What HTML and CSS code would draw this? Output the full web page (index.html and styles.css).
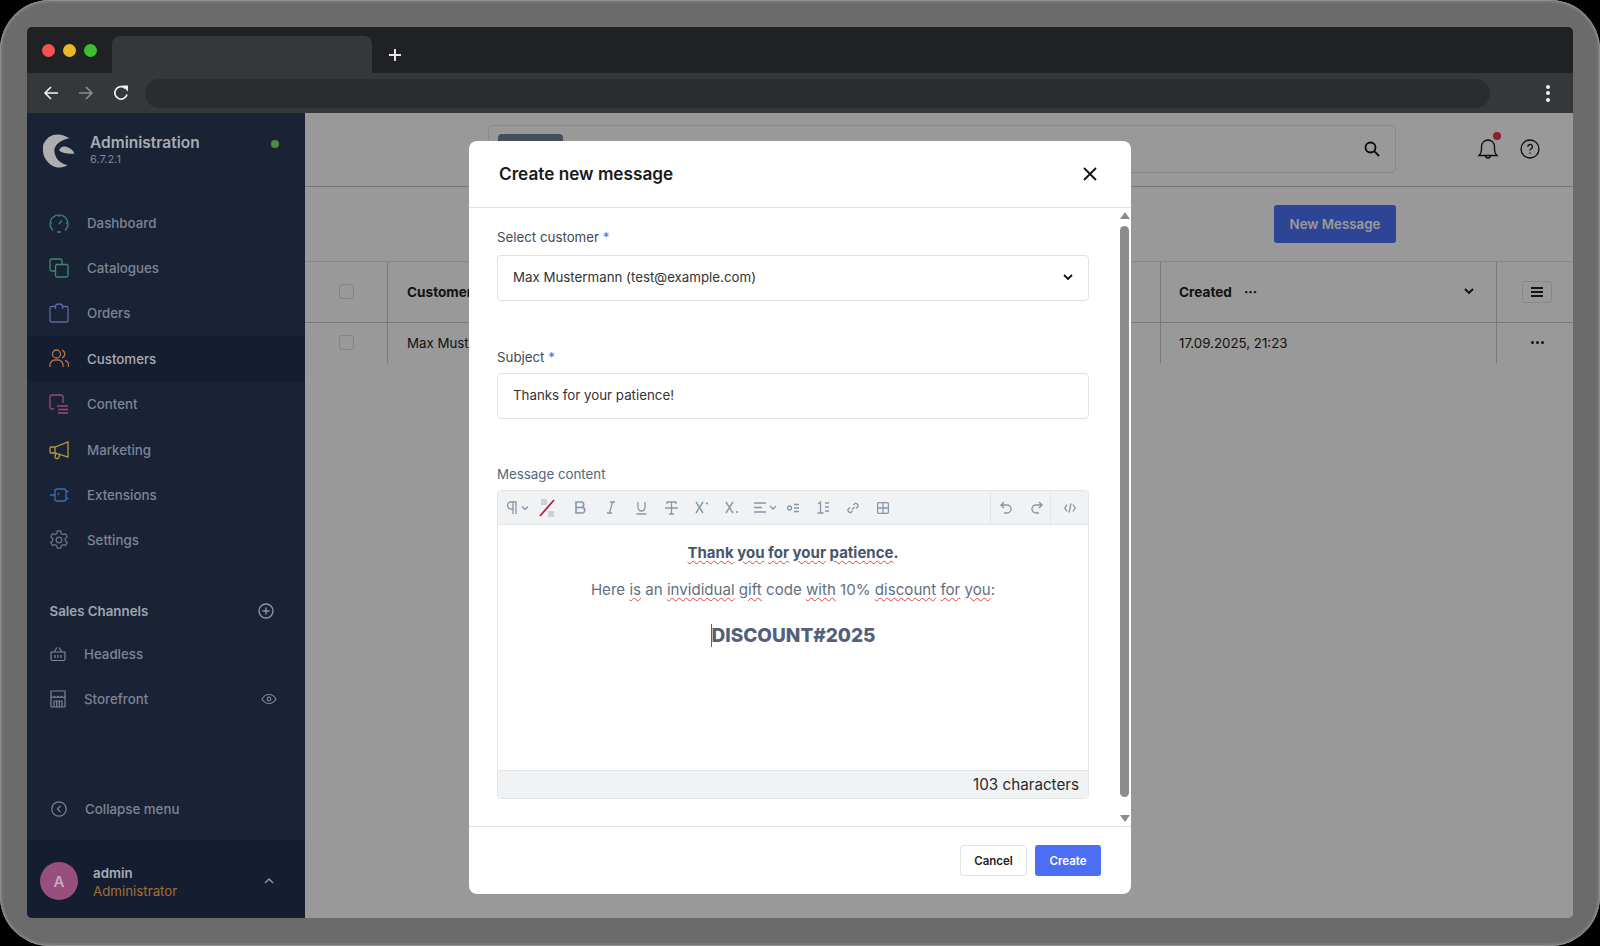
FILE: index.html
```html
<!DOCTYPE html>
<html lang="en">
<head>
  <meta charset="UTF-8">
  <meta name="viewport" content="width=device-width, initial-scale=1.0">
  <title>Administration</title>
  <link rel="stylesheet" href="styles.css">
</head>
<body>
  <div class="bezel">
    <div class="window">

      <!-- browser chrome -->
      <div class="tabstrip">
        <div class="lights">
          <span class="light red"></span>
          <span class="light yellow"></span>
          <span class="light green"></span>
        </div>
        <div class="tab"></div>
        <svg class="new-tab" width="14" height="14" viewBox="0 0 14 14"><path d="M7 1v12M1 7h12" stroke="#e6e6e6" stroke-width="2" fill="none"/></svg>
      </div>
      <div class="toolbar">
        <svg class="nav" width="16" height="16" viewBox="0 0 16 16"><path d="M15 8H2M8 2L2 8l6 6" stroke="#f2f2f2" stroke-width="1.6" fill="none"/></svg>
        <svg class="nav" width="16" height="16" viewBox="0 0 16 16"><path d="M1 8h13M8 2l6 6-6 6" stroke="#8a8c8e" stroke-width="1.6" fill="none"/></svg>
        <svg class="nav" width="16" height="16" viewBox="0 0 16 16"><path d="M14 9.500A6.200 6.200 0 1 1 12.300 3.400" stroke="#f2f2f2" stroke-width="1.7" fill="none"/><path d="M9 .5h6v6z" fill="#f2f2f2"/></svg>
        <div class="address"></div>
        <div class="kebab"><i></i><i></i><i></i></div>
      </div>

      <div class="app">
        <!-- sidebar -->
        <aside class="sidebar">
          <div class="brand">
            <svg class="logo" width="32" height="34" viewBox="0 0 32 34"><path d="M26.300 4.300C20 0 12-1 6 3 0 8-1 13 0 18c1 8 8 15 15 15.500 3 0 7-.5 9.700-2.500-6.700-1-12.700-6-13.400-14C11 11 18 6 26.300 4.300z" fill="#aeaeae"/><path d="M16 16.500C17 13 20 12 23 12.700c4 .8 7 3.300 8.500 6.800-4.500.5-11.500.5-15.500-3z" fill="#aeaeae"/></svg>
            <div class="brand-text">
              <div class="brand-name">Administration</div>
              <div class="brand-version">6.7.2.1</div>
            </div>
            <span class="status-dot"></span>
          </div>

          <nav class="main-nav">
            <a class="nav-item">
              <svg width="20" height="20" viewBox="0 0 20 20" fill="none" stroke="#3f7d86" stroke-width="1.3"><path d="M4 17.500A9 9 0 1 1 16 17.500"/><path d="M8 19h4M10 11l3-3.500M10 2.500v1.500M3 10H1.500M18.500 10H17"/></svg>
              Dashboard
            </a>
            <a class="nav-item">
              <svg width="20" height="20" viewBox="0 0 20 20" fill="none" stroke="#3f8a6d" stroke-width="1.3"><path d="M13 6.500V2.500a1.500 1.500 0 0 0-1.500-1.500h-9A1.500 1.500 0 0 0 1 2.500v9A1.500 1.500 0 0 0 2.500 13h4"/><rect x="6.500" y="6.500" width="12.500" height="12.500" rx="1.500"/></svg>
              Catalogues
            </a>
            <a class="nav-item">
              <svg width="20" height="20" viewBox="0 0 20 20" fill="none" stroke="#5c6aa8" stroke-width="1.3"><path d="M6 3.500H2.500A1.500 1.500 0 0 0 1 5v12.500A1.500 1.500 0 0 0 2.500 19h15a1.500 1.500 0 0 0 1.500-1.500V5a1.500 1.500 0 0 0-1.500-1.500H14"/><path d="M6.500 6V3.500a3.500 2.500 0 0 1 7 0V6"/></svg>
              Orders
            </a>
            <a class="nav-item active">
              <svg width="20" height="20" viewBox="0 0 20 20" fill="none" stroke="#b0734a" stroke-width="1.3"><circle cx="7.500" cy="5" r="4"/><path d="M1 18v-2a5 5 0 0 1 5-5h3a5 5 0 0 1 5 5v2M13 1.200a4 4 0 0 1 0 7.600M16 11.500a4.500 4.500 0 0 1 3.500 4.500v2"/></svg>
              Customers
            </a>
            <a class="nav-item">
              <svg width="20" height="20" viewBox="0 0 20 20" fill="none" stroke="#9a4a7c" stroke-width="1.3"><path d="M14 9V2.500A1.500 1.500 0 0 0 12.500 1h-10A1.500 1.500 0 0 0 1 2.500v11A1.500 1.500 0 0 0 2.500 15H5"/><path d="M8 12h11M9 15.500h10M9 19h10" stroke-width="1.600"/></svg>
              Content
            </a>
            <a class="nav-item">
              <svg width="20" height="20" viewBox="0 0 20 20" fill="none" stroke="#b39b33" stroke-width="1.3"><path d="M19 2v15L6 13H2a1 1 0 0 1-1-1V8a1 1 0 0 1 1-1h4zM6 7v6M7 13.500l-1 2.500a2 2 0 0 0 4 1l.5-2"/></svg>
              Marketing
            </a>
            <a class="nav-item">
              <svg width="20" height="20" viewBox="0 0 20 20" fill="none" stroke="#3f6ea8" stroke-width="1.3"><rect x="6" y="4" width="11" height="12" rx="2"/><path d="M1 10h5M17 6.500h2.500M17 13.500h2.500M9.500 8v2"/></svg>
              Extensions
            </a>
            <a class="nav-item">
              <svg width="20" height="20" viewBox="0 0 20 20" fill="none" stroke="#6a7280" stroke-width="1.3"><circle cx="10" cy="10" r="2.800"/><path d="M8.300 1h3.400l.6 2.600 1.700 1 2.500-.8 1.700 3-1.900 1.800v2l1.900 1.800-1.700 3-2.500-.8-1.700 1-.6 2.600H8.300l-.6-2.600-1.700-1-2.500.8-1.700-3 1.900-1.800v-2L1.800 6.800l1.700-3 2.500.8 1.700-1z"/></svg>
              Settings
            </a>
          </nav>

          <div class="channels-head">
            <span>Sales Channels</span>
            <svg width="16" height="16" viewBox="0 0 16 16" fill="none" stroke="#8c93a1" stroke-width="1.4"><circle cx="8" cy="8" r="7"/><path d="M8 4.500v7M4.500 8h7"/></svg>
          </div>
          <a class="channel">
            <svg width="16" height="16" viewBox="0 0 16 16" fill="none" stroke="#7d8595" stroke-width="1.2"><path d="M1 6h14v7a1.500 1.500 0 0 1-1.500 1.500h-11A1.500 1.500 0 0 1 1 13zM4 6l3-4.500M12 6L9 1.500M5 9v3M8 9v3M11 9v3"/></svg>
            <span class="channel-name">Headless</span>
          </a>
          <a class="channel">
            <svg width="16" height="18" viewBox="0 0 16 18" fill="none" stroke="#7d8595" stroke-width="1.2"><path d="M1 1h14v15.500a.5.5 0 0 1-.5.5h-13a.5.5 0 0 1-.5-.5zM1 6c1 2 3 2 3.500 0 .5 2 3 2 3.500 0 .5 2 3 2 3.500 0 .5 2 2.500 2 3.500 0M4 17v-6h8v6M6.700 11v6M9.300 11v6"/></svg>
            <span class="channel-name">Storefront</span>
            <svg class="eye" width="16" height="12" viewBox="0 0 16 12" fill="none" stroke="#7d8595" stroke-width="1.2"><path d="M1 6c3.500-6 10.500-6 14 0-3.500 6-10.500 6-14 0z"/><circle cx="8" cy="6" r="1.800"/></svg>
          </a>

          <a class="collapse">
            <svg width="16" height="16" viewBox="0 0 16 16" fill="none" stroke="#7d8595" stroke-width="1.2"><circle cx="8" cy="8" r="7.200"/><path d="M9.500 5L6.500 8l3 3"/></svg>
            Collapse menu
          </a>
          <div class="user">
            <div class="avatar">A</div>
            <div class="user-text">
              <div class="user-name">admin</div>
              <div class="user-role">Administrator</div>
            </div>
            <svg width="10" height="6" viewBox="0 0 10 6" fill="none" stroke="#8c93a1" stroke-width="1.5"><path d="M1 5l4-4 4 4"/></svg>
          </div>
        </aside>

        <!-- page behind the modal -->
        <main class="content">
          <div class="topbar">
            <div class="search">
              <span class="search-chip"></span>
              <svg width="16" height="16" viewBox="0 0 16 16" fill="none" stroke="#111" stroke-width="1.8"><circle cx="6.500" cy="6.500" r="5"/><path d="M10.200 10.200L15 15"/></svg>
            </div>
            <div class="bell">
              <svg width="22" height="24" viewBox="0 0 22 24" fill="none" stroke="#111" stroke-width="1.3"><path d="M2 18.500c1.500-1.500 2.500-3 2.500-6V9.500a6.500 6.500 0 0 1 13 0v3c0 3 1 4.500 2.500 6zM8.500 18.500a2.500 2.500 0 0 0 5 0"/></svg>
              <span class="bell-dot"></span>
            </div>
            <svg class="help" width="20" height="20" viewBox="0 0 20 20" fill="none" stroke="#111" stroke-width="1.300"><circle cx="10" cy="10" r="9"/><path d="M7.800 7.800a2.300 2.300 0 1 1 3.400 2c-.8.500-1.200 1-1.200 1.700M10 13.500v1.300"/></svg>
          </div>
          <div class="actionbar">
            <button class="btn-new">New Message</button>
          </div>
          <div class="table">
            <div class="row head">
              <div class="cell cell-check"><span class="checkbox"></span></div>
              <div class="cell cell-name"><b>Customer</b></div>
              <div class="cell cell-date">
                <b>Created</b>
                <span class="dots">···</span>
                <svg class="sort" width="10" height="7" viewBox="0 0 10 7" fill="none" stroke="#111" stroke-width="1.800"><path d="M1 1l4 4 4-4"/></svg>
              </div>
              <div class="cell cell-end">
                <span class="col-btn"><i></i><i></i><i></i></span>
              </div>
            </div>
            <div class="row">
              <div class="cell cell-check"><span class="checkbox"></span></div>
              <div class="cell cell-name">Max Mustermann</div>
              <div class="cell cell-date">17.09.2025, 21:23</div>
              <div class="cell cell-end"><span class="row-dots"><i></i><i></i><i></i></span></div>
            </div>
          </div>
          <div class="backdrop"></div>

          <!-- modal -->
          <div class="modal">
            <div class="modal-head">
              <h2>Create new message</h2>
              <svg width="14" height="14" viewBox="0 0 14 14" fill="none" stroke="#111" stroke-width="1.800"><path d="M1 1l12 12M13 1L1 13"/></svg>
            </div>
            <div class="modal-body">
              <div class="form">
                <label class="field-label label-customer">Select customer <em>*</em></label>
                <div class="input">
                  Max Mustermann (test@example.com)
                  <svg width="10" height="7" viewBox="0 0 10 7" fill="none" stroke="#111" stroke-width="1.800"><path d="M1 1l4 4 4-4"/></svg>
                </div>
                <label class="field-label label-subject">Subject <em>*</em></label>
                <div class="input">Thanks for your patience!</div>
                <label class="field-label label-message">Message content</label>
                <div class="editor">
                  <div class="editor-tools">
                    <div class="tools-main">
                      <span class="tool tool-para"><svg width="24" height="14" viewBox="0 0 24 14" fill="none" stroke="#8797a8" stroke-width="1.300"><path d="M10 13V1H5a3.500 3.500 0 0 0 0 7h2M7 13V1M16 5.500l3 3 3-3" /></svg></span>
                      <span class="tool"><svg width="18" height="20" viewBox="0 0 18 20" fill="none"><path d="M3 1h6v6H3zM10 13h6v6h-6z" fill="#ccd1d6"/><path d="M16 2L2 18" stroke="#b3243c" stroke-width="1.800"/></svg></span>
                      <span class="tool tool-b"><svg width="11" height="13" viewBox="0 0 11 13" fill="none" stroke="#8797a8" stroke-width="1.600"><path d="M1 1h5a2.700 2.700 0 0 1 0 5.500H1zM1 6.500h6a2.700 2.700 0 0 1 0 5.500H1z"/></svg></span>
                      <span class="tool"><svg width="8" height="13" viewBox="0 0 8 13" fill="none" stroke="#8797a8" stroke-width="1.300"><path d="M3 1h5M0 12h5M5.500 1l-3 11"/></svg></span>
                      <span class="tool"><svg width="11" height="14" viewBox="0 0 11 14" fill="none" stroke="#8797a8" stroke-width="1.300"><path d="M2 1v5.500a3.500 3.500 0 0 0 7 0V1M.5 13h10"/></svg></span>
                      <span class="tool"><svg width="13" height="14" viewBox="0 0 13 14" fill="none" stroke="#8797a8" stroke-width="1.300"><path d="M2 3V1h9v2M6.500 1v12M4 13h5M0 7h13"/></svg></span>
                      <span class="tool"><svg width="13" height="13" viewBox="0 0 13 13" fill="none" stroke="#8797a8" stroke-width="1.400"><path d="M1 1l7 11M8 1L1 12M11 2.500h2"/></svg></span>
                      <span class="tool"><svg width="13" height="13" viewBox="0 0 13 13" fill="none" stroke="#8797a8" stroke-width="1.400"><path d="M1 1l7 11M8 1L1 12M11 11h2"/></svg></span>
                      <span class="tool tool-align"><svg width="24" height="11" viewBox="0 0 24 11" fill="none" stroke="#8797a8" stroke-width="1.300"><path d="M0 1h12M0 5.500h8M0 10h12M16 4l3 3 3-3"/></svg></span>
                      <span class="tool"><svg width="12" height="10" viewBox="0 0 12 10" fill="none" stroke="#8797a8" stroke-width="1.300"><circle cx="2.500" cy="5" r="2"/><path d="M7 1.500h5M7 5h5M7 8.500h5"/></svg></span>
                      <span class="tool"><svg width="12" height="13" viewBox="0 0 12 13" fill="none" stroke="#8797a8" stroke-width="1.300"><path d="M1 3l2.500-2v11M.5 12h6M8 2h4M8 6h4M8 10h4"/></svg></span>
                      <span class="tool"><svg width="12" height="12" viewBox="0 0 12 12" fill="none" stroke="#8797a8" stroke-width="1.300"><path d="M5 7.500l2.500-2.500M6.500 3l1.500-1.500a2.500 2.500 0 0 1 3 3L9 6.500M5.500 9L4 10.500a2.500 2.500 0 0 1-3-3L3 5.500"/></svg></span>
                      <span class="tool"><svg width="12" height="12" viewBox="0 0 12 12" fill="none" stroke="#8797a8" stroke-width="1.300"><rect x=".6" y=".6" width="10.800" height="10.800" rx="1.500"/><path d="M6 .6v10.800M.6 6h10.800"/></svg></span>
                    </div>
                    <div class="tools-group">
                      <svg width="12" height="13" viewBox="0 0 12 13" fill="none" stroke="#8797a8" stroke-width="1.400"><path d="M4 1L1 4l3 3M1 4h6a4 4 0 0 1 0 8H4"/></svg>
                      <svg width="12" height="13" viewBox="0 0 12 13" fill="none" stroke="#8797a8" stroke-width="1.400"><path d="M8 1l3 3-3 3M11 4H5a4 4 0 0 0 0 8h3"/></svg>
                    </div>
                    <div class="tools-code">
                      <svg width="12" height="10" viewBox="0 0 12 10" fill="none" stroke="#8797a8" stroke-width="1.300"><path d="M3 1.500L.8 5 3 8.500M9 1.500L11.200 5 9 8.500M7 .5L5 9.500"/></svg>
                    </div>
                  </div>
                  <div class="editor-text">
                    <p class="thanks"><u>Thank</u> <u>you</u> <u>for</u> <u>your</u> <u>patience</u>.</p>
                    <p class="gift">Here <u>is</u> an <u>invididual</u> <u>gift</u> code <u>with</u> 10% <u>discount</u> <u>for</u> <u>you</u>:</p>
                    <p class="code"><span class="caret">DISCOUNT#2025</span></p>
                  </div>
                  <div class="editor-foot">103 characters</div>
                </div>
              </div>
              <div class="scrollbar">
                <span class="arrow up"></span>
                <span class="thumb"></span>
                <span class="arrow down"></span>
              </div>
            </div>
            <div class="modal-foot">
              <button class="btn-cancel">Cancel</button>
              <button class="btn-create">Create</button>
            </div>
          </div>
        </main>
      </div>
    </div>
  </div>
</body>
</html>
```

FILE: styles.css
```css
* {
  box-sizing: border-box;
}
html, body {
  margin: 0;
  height: 100%;
  background: #000;
  overflow: hidden;
}
body {
  font-family: Inter, "Noto Sans", sans-serif;
  font-size: 13.3px;
}
.bezel {
  width: 1600px;
  height: 946px;
  padding: 27px 27px 28px 27px;
  background: #6b6b6b;
  border-radius: 50px;
  box-shadow: inset 0 0 0 1px #8f8f8f, inset 0 0 0 3px #767676;
}
.window {
  display: flex;
  flex-direction: column;
  height: 100%;
  border-radius: 5px;
  overflow: hidden;
}

/* browser chrome */
.tabstrip {
  display: flex;
  align-items: flex-end;
  height: 46px;
  background: #1f2124;
}
.lights {
  display: flex;
  gap: 8.4px;
  width: 85px;
  padding: 17px 0 0 14.5px;
  align-self: flex-start;
}
.light {
  width: 13px;
  height: 13px;
  border-radius: 50%;
}
.light.red { background: #f4544f; }
.light.yellow { background: #e9b826; }
.light.green { background: #3fbd33; }
.tab {
  width: 260px;
  height: 37px;
  background: #35383b;
  border-radius: 8px 8px 0 0;
}
.new-tab {
  margin: 0 0 11px 16px;
}
.toolbar {
  display: flex;
  align-items: center;
  height: 40px;
  background: #35383b;
}
.nav {
  margin-left: 16px;
  flex: none;
  margin-right: 3px;
}
.nav:first-child {
  margin-left: 16px;
}
.address {
  width: 1345px;
  height: 29px;
  margin-left: 13px;
  background: #2a2d2f;
  border-radius: 15px;
}
.kebab {
  display: flex;
  flex-direction: column;
  gap: 2.5px;
  margin-left: 56px;
}
.kebab i {
  width: 4px;
  height: 4px;
  background: #f2f2f2;
  border-radius: 50%;
}
.app {
  display: flex;
  flex: 1;
  min-height: 0;
}

/* sidebar */
.sidebar {
  display: flex;
  flex-direction: column;
  width: 278px;
  flex: none;
  background: #1a2236;
  color: #7d8595;
}
.brand {
  display: flex;
  align-items: center;
  height: 68px;
  padding: 7px 0 0 16px;
}
.brand-text {
  margin: -3px 0 0 15px;
}
.brand-name {
  font-size: 15.5px;
  font-weight: 600;
  line-height: 20px;
  color: #a8acb4;
}
.brand-version {
  font-size: 11px;
  line-height: 13px;
  color: #7d8595;
}
.status-dot {
  width: 8px;
  height: 8px;
  margin: -14px 0 0 71px;
  background: #4e8c3c;
  border-radius: 50%;
}
.main-nav {
  margin-top: 19px;
}
.nav-item {
  display: flex;
  align-items: center;
  gap: 18px;
  height: 45.4px;
  padding-left: 22px;
  font-weight: 500;
}
.nav-item.active {
  background: #151d30;
  color: #a8acb4;
}
.channels-head {
  display: flex;
  justify-content: space-between;
  align-items: center;
  margin-top: 26px;
  height: 44px;
  padding: 0 31.5px 0 22.5px;
  font-weight: 600;
  color: #a0a5ae;
}
.channel {
  display: flex;
  align-items: center;
  height: 45.5px;
  padding-left: 23px;
  font-weight: 500;
}
.channels-head + .channel {
  margin-top: -2px;
}
.channel-name {
  margin-left: 18px;
}
.channel svg:first-child {
  flex: none;
}
.eye {
  margin-left: auto;
  margin-right: 28px;
}
.collapse {
  display: flex;
  align-items: center;
  gap: 18px;
  margin-top: auto;
  height: 60px;
  padding: 0 0 3px 24px;
  font-weight: 500;
}
.user {
  display: flex;
  align-items: center;
  height: 78px;
  padding: 4px 31px 0 13px;
  background: #151d30;
}
.avatar {
  display: flex;
  align-items: center;
  justify-content: center;
  width: 38px;
  height: 38px;
  background: #964f7f;
  border-radius: 50%;
  font-size: 15px;
  font-weight: 600;
  color: #c9a9bf;
}
.user-text {
  flex: 1;
  margin-left: 15px;
  padding-top: 2px;
  line-height: 18px;
}
.user-name {
  font-weight: 600;
  color: #a8acb4;
}
.user-role {
  color: #a36f35;
}

/* page behind the modal */
.content {
  position: relative;
  flex: 1;
  background: #fff;
  color: #222;
}
.backdrop {
  position: absolute;
  inset: 0;
  background: rgba(0, 0, 0, 0.4);
}
.topbar {
  display: flex;
  align-items: center;
  height: 73.5px;
  padding-left: 183px;
  border-bottom: 1px solid #c0c4c8;
}
.search {
  display: flex;
  align-items: center;
  justify-content: flex-end;
  position: relative;
  width: 908px;
  height: 48px;
  padding-right: 15px;
  margin-top: -1px;
  border: 1px solid #e2e5e8;
  border-radius: 4px;
}
.search-chip {
  position: absolute;
  left: 9px;
  top: 8px;
  width: 65px;
  height: 30px;
  background: #73839c;
  border-radius: 4px;
}
.bell {
  position: relative;
  margin-left: 81px;
  height: 24px;
}
.bell-dot {
  position: absolute;
  right: -2px;
  top: -5px;
  width: 8px;
  height: 8px;
  background: #f0314f;
  border-radius: 50%;
}
.help {
  margin-left: 21px;
}
.actionbar {
  display: flex;
  justify-content: flex-end;
  align-items: center;
  height: 73.5px;
  padding: 0 177px 0 0;
  margin-top: 1px;
}
.btn-new {
  width: 122px;
  height: 38px;
  background: #4e73f8;
  border: 0;
  border-radius: 3px;
  font: 600 13.3px Inter, sans-serif;
  color: #fff;
}
.table {
  border-top: 1px solid #dfe2e5;
}
.row {
  display: flex;
  height: 40.5px;
}
.row.head {
  height: 60.5px;
  border-bottom: 1px solid #c6cacf;
}
.row.head b {
  font-size: 13.6px;
}
.cell {
  display: flex;
  align-items: center;
}
.cell-check {
  justify-content: center;
  width: 82px;
}
.checkbox {
  width: 15px;
  height: 15px;
  margin-left: 1px;
  border: 1px solid #d8dce0;
  border-radius: 3px;
}
.cell-name {
  width: 773px;
  padding-left: 19px;
  border-left: 1px solid #c6cacf;
}
.cell-date {
  width: 336px;
  padding-left: 18px;
  border-left: 1px solid #c6cacf;
}
.dots {
  margin-left: 12px;
  font-weight: 700;
}
.sort {
  margin-left: auto;
  margin-right: 22px;
}
.cell-end {
  flex: 1;
  justify-content: center;
  padding-left: 4px;
  border-left: 1px solid #c6cacf;
}
.col-btn {
  display: flex;
  flex-direction: column;
  align-items: center;
  justify-content: center;
  gap: 2px;
  width: 30px;
  height: 22px;
  border: 1px solid #dfe2e5;
  border-radius: 3px;
}
.col-btn i {
  width: 12px;
  height: 2px;
  background: #222;
}
.row-dots {
  display: flex;
  gap: 2px;
}
.row-dots i {
  width: 3px;
  height: 3px;
  background: #222;
  border-radius: 50%;
}

/* modal */
.modal {
  position: absolute;
  left: 164px;
  top: 28px;
  display: flex;
  flex-direction: column;
  width: 662px;
  height: 753px;
  background: #fff;
  border-radius: 8px;
}
.modal-head {
  display: flex;
  justify-content: space-between;
  align-items: center;
  flex: none;
  height: 66.5px;
  padding: 0 34px 0 30px;
  border-bottom: 1px solid #e0e3e6;
}
.modal-head h2 {
  margin: 0;
  font-size: 17.2px;
  font-weight: 600;
  color: #1a1a1a;
}
.modal-body {
  display: flex;
  flex: 1;
  min-height: 0;
}
.form {
  width: 651px;
  padding: 0 0 0 28px;
}
.field-label {
  display: block;
  height: 17px;
  line-height: 17px;
  color: #52667a;
}
.field-label em {
  font-style: normal;
  color: #4f6ef7;
}
.label-customer {
  margin-top: 21px;
  margin-bottom: 9.5px;
  color: #3d4a57;
}
.label-subject {
  margin-top: 47.5px;
  margin-bottom: 7px;
  color: #3d4a57;
}
.label-message {
  margin-top: 47.8px;
  margin-bottom: 7px;
}
.input {
  display: flex;
  justify-content: space-between;
  align-items: center;
  width: 592px;
  height: 46px;
  padding: 0 15px 2px 15px;
  border: 1px solid #dfe2e5;
  border-radius: 4px;
  color: #333;
}
.editor {
  display: flex;
  flex-direction: column;
  width: 592px;
  height: 308.5px;
  border: 1px solid #e3e6e9;
  border-radius: 4px;
  overflow: hidden;
}
.editor-tools {
  display: flex;
  flex: none;
  height: 34px;
  background: #f0f2f4;
  border-bottom: 1px solid #e3e6e9;
}
.tools-main {
  display: flex;
  align-items: center;
  width: 492px;
  padding-left: 6px;
}
.tool {
  display: flex;
  align-items: center;
  justify-content: center;
  flex: none;
  width: 30.3px;
}
.tool-para {
  width: 28px;
}
.tool-b {
  margin-left: 3px;
}
.tool-align svg {
  margin-left: 8px;
  flex: none;
}
.tools-group {
  display: flex;
  align-items: center;
  justify-content: center;
  gap: 19px;
  width: 61px;
  padding-left: 1px;
  border-left: 1px solid #e3e6e9;
  border-right: 1px solid #e3e6e9;
}
.tools-code {
  display: flex;
  align-items: center;
  justify-content: center;
  flex: 1;
}
.editor-text {
  flex: 1;
  padding-top: 17.5px;
  text-align: center;
  font-size: 15.1px;
  color: #5f6f82;
}
.editor-text p {
  margin: 0;
}
.editor-text u {
  text-decoration: underline wavy #e0443a 1px;
  text-underline-offset: 2px;
}
.thanks {
  height: 37px;
  line-height: 20px;
  font-size: 15px;
  font-weight: 700;
  color: #47566b;
}
.gift {
  height: 43px;
  line-height: 20px;
}
.code {
  line-height: 26px;
  font-size: 19px;
  font-weight: 800;
  color: #52607a;
}
.caret {
  border-left: 1px solid #52607a;
}
.editor-foot {
  flex: none;
  height: 28px;
  padding-right: 9px;
  line-height: 28px;
  background: #f0f2f4;
  border-top: 1px solid #e3e6e9;
  text-align: right;
  font-size: 15.2px;
  color: #2a2a2a;
}
.scrollbar {
  display: flex;
  flex-direction: column;
  align-items: center;
  width: 9px;
  padding-top: 4px;
}
.thumb {
  width: 9px;
  height: 571px;
  margin-top: 7px;
  background: #8c8c8c;
  border-radius: 5px;
}
.arrow {
  width: 0;
  height: 0;
  border-left: 5px solid transparent;
  border-right: 5px solid transparent;
}
.arrow.up {
  border-bottom: 7px solid #8c8c8c;
}
.arrow.down {
  margin-top: 18px;
  border-top: 7px solid #8c8c8c;
}
.modal-foot {
  display: flex;
  justify-content: flex-end;
  align-items: center;
  gap: 8px;
  flex: none;
  height: 68px;
  padding: 0 30px 0 0;
  border-top: 1px solid #e0e3e6;
}
.modal-foot button {
  height: 31px;
  border-radius: 3px;
  font: 600 11.5px Inter, sans-serif;
}
.btn-cancel {
  width: 67px;
  background: #fff;
  border: 1px solid #e0e3e6;
  color: #222;
}
.btn-create {
  width: 66px;
  background: #4b6ef5;
  border: 0;
  color: #fff;
}
```
